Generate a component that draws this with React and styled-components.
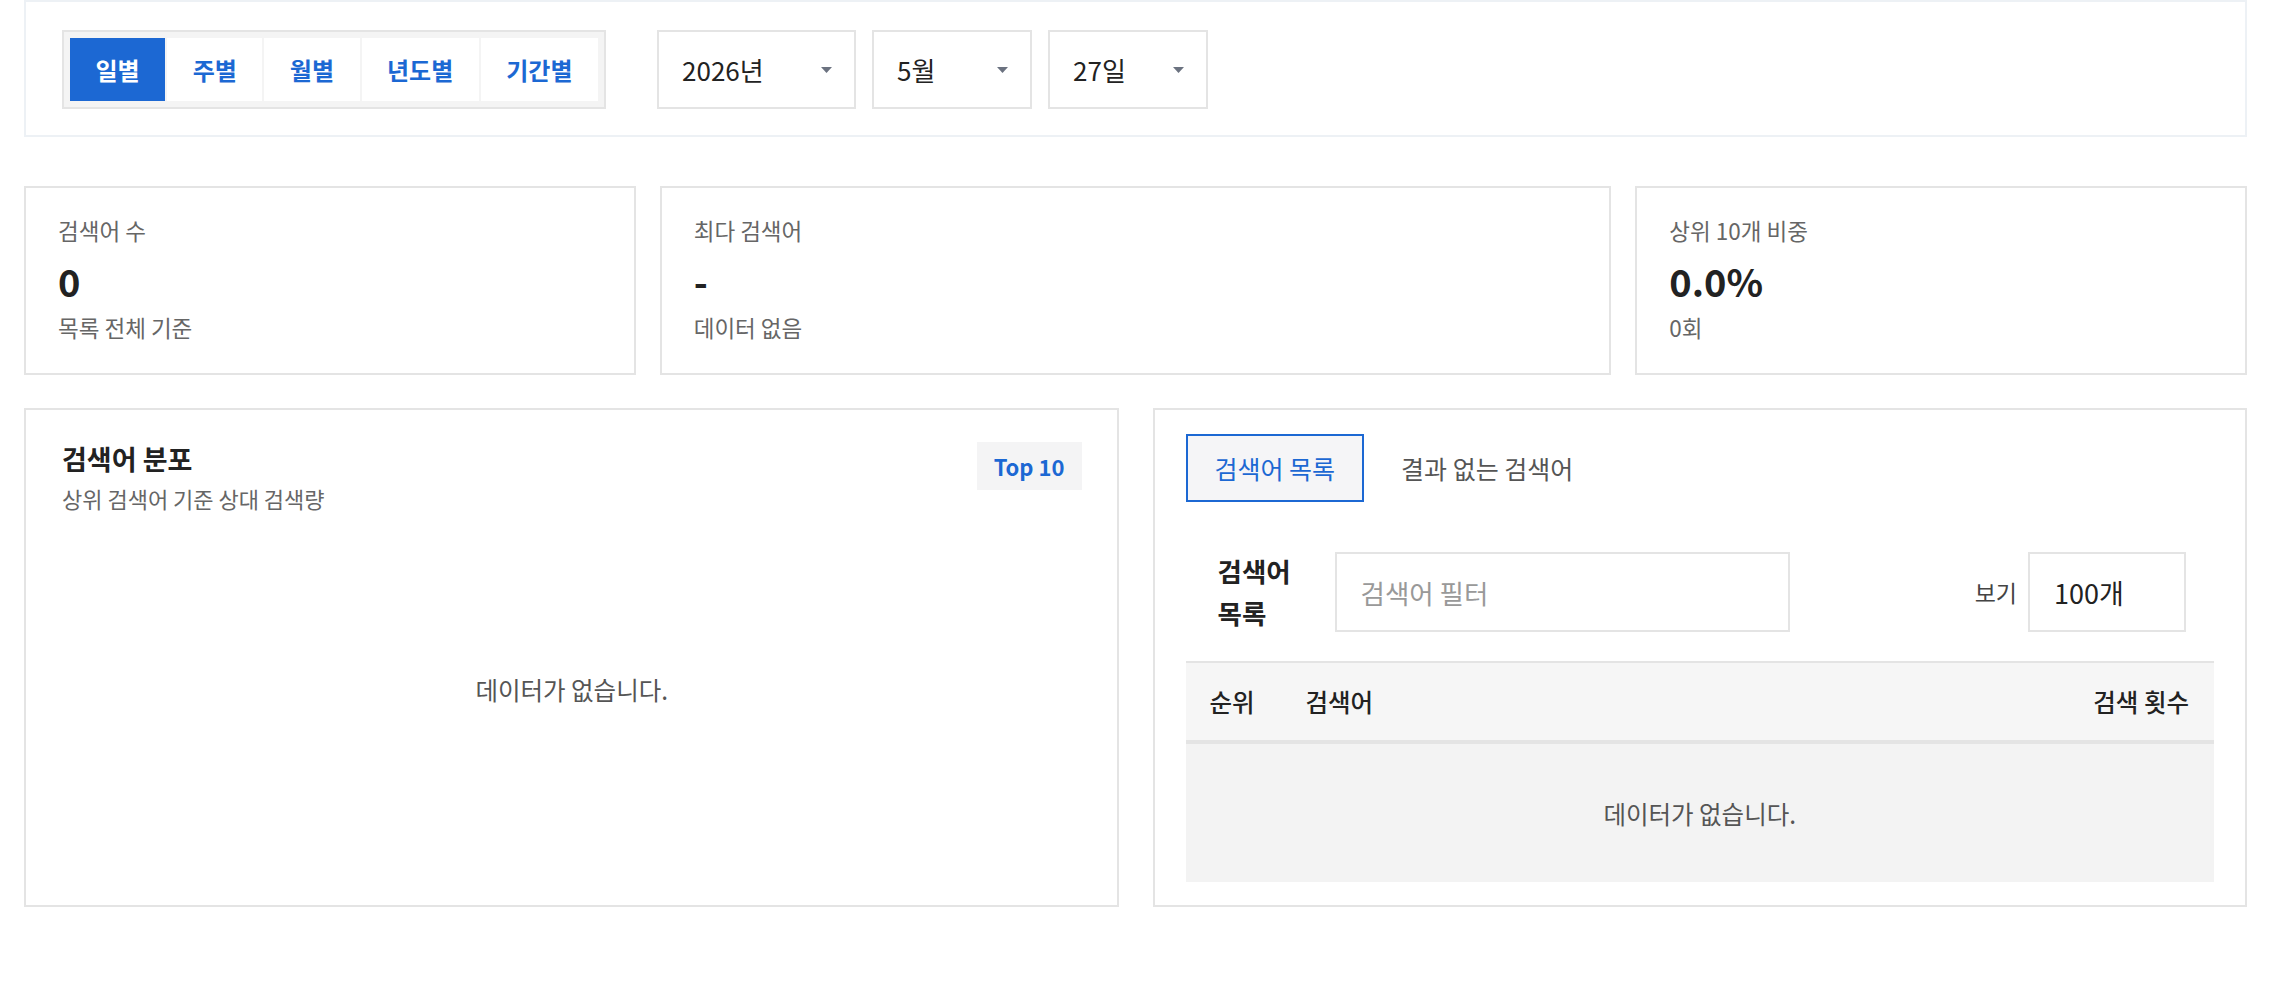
import React, { useState } from 'react';
import styled, { createGlobalStyle } from 'styled-components';

const BLUE = '#1c68d3';
const LINE = '#e4e4e4';

const GlobalStyle = createGlobalStyle`
  body {
    margin: 0;
    background: #fff;
    font-family: "Noto Sans CJK KR", "Noto Sans", sans-serif;
    color: #222;
  }
  * { box-sizing: border-box; }
`;

const periods = ['일별', '주별', '월별', '년도별', '기간별'];

const stats = [
  { label: '검색어 수', value: '0', sub: '목록 전체 기준' },
  { label: '최다 검색어', value: '-', sub: '데이터 없음' },
  { label: '상위 10개 비중', value: '0.0%', sub: '0회' },
];

const Caret = () => (
  <svg width="11" height="6" viewBox="0 0 11 6">
    <polygon points="0,0 11,0 5.5,6" fill="#6b7280" />
  </svg>
);

const App = () => {
  const [period, setPeriod] = useState('일별');
  const [tab, setTab] = useState('list');

  return (
    <Page>
      <GlobalStyle />
      <FilterBar>
        <Segmented>
          {periods.map(p => (
            <SegButton key={p} active={p === period} onClick={() => setPeriod(p)}>
              {p}
            </SegButton>
          ))}
        </Segmented>
        <Selects>
          <SelectBox width={199}>
            <span>2026년</span>
            <Caret />
          </SelectBox>
          <SelectBox width={160}>
            <span>5월</span>
            <Caret />
          </SelectBox>
          <SelectBox width={160}>
            <span>27일</span>
            <Caret />
          </SelectBox>
        </Selects>
      </FilterBar>

      <StatRow>
        {stats.map(s => (
          <StatCard key={s.label}>
            <StatLabel>{s.label}</StatLabel>
            <StatValue>{s.value}</StatValue>
            <StatSub>{s.sub}</StatSub>
          </StatCard>
        ))}
      </StatRow>

      <PanelRow>
        <Panel>
          <ChartHead>
            <div>
              <PanelTitle>검색어 분포</PanelTitle>
              <PanelSub>상위 검색어 기준 상대 검색량</PanelSub>
            </div>
            <Badge>Top 10</Badge>
          </ChartHead>
          <ChartBody>데이터가 없습니다.</ChartBody>
        </Panel>

        <Panel right>
          <Tabs>
            <Tab active={tab === 'list'} onClick={() => setTab('list')}>
              검색어 목록
            </Tab>
            <Tab active={tab === 'none'} onClick={() => setTab('none')}>
              결과 없는 검색어
            </Tab>
          </Tabs>

          <ListFilter>
            <ListLabel>검색어 목록</ListLabel>
            <FilterInput placeholder="검색어 필터" />
            <Spacer />
            <ViewLabel>보기</ViewLabel>
            <CountBox>100개</CountBox>
          </ListFilter>

          <Table>
            <THead>
              <span>순위</span>
              <span>검색어</span>
              <span>검색 횟수</span>
            </THead>
            <EmptyRow>데이터가 없습니다.</EmptyRow>
          </Table>
        </Panel>
      </PanelRow>
    </Page>
  );
};

const Page = styled.div`
  padding: 0 25px 40px 24px;
`;

const FilterBar = styled.div`
  display: flex;
  align-items: center;
  border: 2px solid #edf1f5;
  padding: 28px 36px 26px;
`;

const Segmented = styled.div`
  display: flex;
  gap: 2px;
  padding: 6px;
  border: 2px solid ${LINE};
  background: #f4f4f4;
`;

const SegButton = styled.button`
  height: 63px;
  padding: 0 25.5px;
  border: 0;
  font-family: inherit;
  font-size: 24px;
  font-weight: 700;
  cursor: pointer;
  background: ${p => (p.active ? BLUE : '#fff')};
  color: ${p => (p.active ? '#fff' : BLUE)};
`;

const Selects = styled.div`
  display: flex;
  gap: 16px;
  margin-left: 51px;
`;

const SelectBox = styled.div`
  width: ${p => p.width}px;
  height: 79px;
  display: flex;
  align-items: center;
  justify-content: space-between;
  padding: 0 22px 0 23px;
  border: 2px solid ${LINE};
  font-size: 26px;
  color: #222;
`;

const StatRow = styled.div`
  display: grid;
  grid-template-columns: 9fr 14fr 9fr;
  gap: 24px;
  margin-top: 49px;
`;

const StatCard = styled.div`
  border: 2px solid ${LINE};
  padding: 28px 32px 32px;
`;

const StatLabel = styled.div`
  font-size: 22.5px;
  line-height: 28px;
  color: #666;
`;

const StatValue = styled.div`
  margin-top: 15px;
  font-size: 38px;
  line-height: 44px;
  font-weight: 700;
  color: #222;
`;

const StatSub = styled.div`
  margin-top: 10px;
  font-size: 22.5px;
  line-height: 28px;
  color: #666;
`;

const PanelRow = styled.div`
  display: grid;
  grid-template-columns: 1fr 1fr;
  gap: 34px;
  margin-top: 33px;
`;

const Panel = styled.section`
  display: flex;
  flex-direction: column;
  border: 2px solid ${LINE};
  padding: ${p => (p.right ? '24px 31px 23px' : '32px 35px 0 36px')};
`;

const ChartHead = styled.div`
  display: flex;
  justify-content: space-between;
  align-items: flex-start;
`;

const PanelTitle = styled.h2`
  margin: 0;
  font-size: 27px;
  line-height: 34px;
  font-weight: 700;
  color: #222;
`;

const PanelSub = styled.div`
  margin-top: 8px;
  font-size: 22px;
  line-height: 28px;
  color: #666;
`;

const Badge = styled.span`
  height: 48px;
  display: flex;
  align-items: center;
  padding: 0 17px;
  background: #f4f4f5;
  color: ${BLUE};
  font-size: 22px;
  font-weight: 700;
`;

const ChartBody = styled.div`
  flex: 1;
  display: flex;
  align-items: center;
  justify-content: center;
  padding-bottom: 38px;
  font-size: 24.5px;
  color: #555;
`;

const Tabs = styled.div`
  display: flex;
  gap: 8px;
`;

const Tab = styled.button`
  height: 68px;
  padding: 0 27px;
  font-family: inherit;
  font-size: 25px;
  cursor: pointer;
  border: 2px solid ${p => (p.active ? BLUE : 'transparent')};
  background: ${p => (p.active ? '#f5f5f7' : 'transparent')};
  color: ${p => (p.active ? BLUE : '#555')};
`;

const ListFilter = styled.div`
  display: flex;
  align-items: center;
  height: 80px;
  margin-top: 50px;
  padding: 0 28px 0 32px;
`;

const ListLabel = styled.div`
  width: 90px;
  margin-right: 27px;
  font-size: 26.5px;
  line-height: 42px;
  font-weight: 700;
  color: #222;
`;

const FilterInput = styled.input`
  width: 455px;
  height: 80px;
  padding: 0 24px;
  border: 2px solid ${LINE};
  outline: none;
  font-family: inherit;
  font-size: 26.5px;
  color: #222;

  &::placeholder {
    color: #999;
  }
`;

const Spacer = styled.div`
  flex: 1;
`;

const ViewLabel = styled.span`
  margin-right: 11px;
  font-size: 23px;
  color: #444;
`;

const CountBox = styled.div`
  width: 158px;
  height: 80px;
  display: flex;
  align-items: center;
  padding: 0 24px;
  border: 2px solid ${LINE};
  font-size: 27px;
  color: #222;
`;

const Table = styled.div`
  margin-top: 29px;
`;

const THead = styled.div`
  display: grid;
  grid-template-columns: 96px 1fr auto;
  align-items: center;
  height: 83px;
  padding: 0 25px 0 24px;
  border-top: 2px solid ${LINE};
  border-bottom: 4px solid ${LINE};
  background: #f6f6f6;
  font-size: 24.5px;
  font-weight: 500;
  color: #222;
`;

const EmptyRow = styled.div`
  height: 138px;
  display: flex;
  align-items: center;
  justify-content: center;
  background: #f3f3f3;
  font-size: 24.5px;
  color: #555;
`;

export default App;
